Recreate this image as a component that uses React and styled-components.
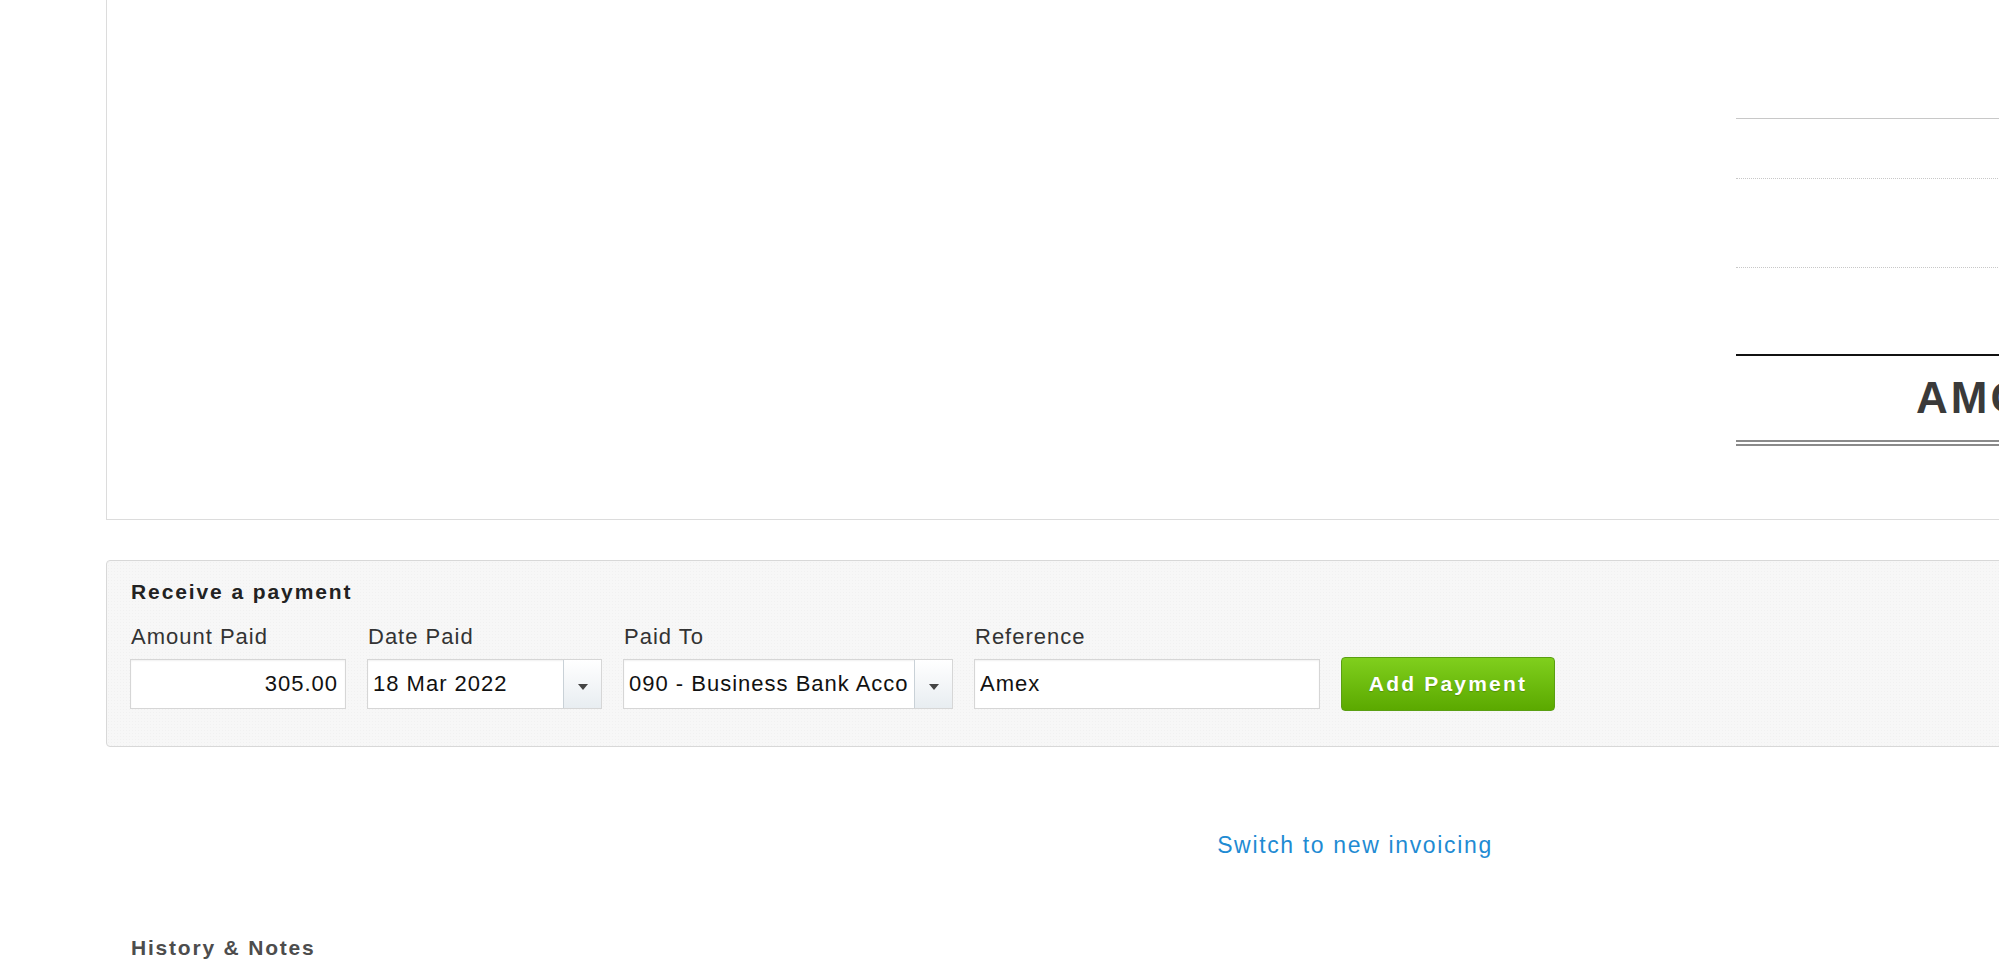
import React from 'react';
import styled, { createGlobalStyle } from 'styled-components';

const GlobalStyle = createGlobalStyle`
  html, body {
    margin: 0;
    padding: 0;
    background: #fff;
    overflow: hidden;
  }
  body {
    font-family: "Liberation Sans", Arial, sans-serif;
    color: #333;
  }
`;

const Main = styled.main`
  margin-left: 106px;
  width: 2498px;
`;

const InvoicePanel = styled.section`
  height: 520px;
  box-sizing: border-box;
  border-left: 1px solid #dcdcdc;
  border-bottom: 1px solid #dcdcdc;
  display: flex;
  justify-content: flex-end;
  padding-top: 118px;
`;

const Totals = styled.div`
  width: 868px;
  display: flex;
  flex-direction: column;
`;

const TotalRow = styled.div`
  height: ${p => p.$h}px;
  border-top: 1px ${p => (p.$dotted ? 'dotted' : 'solid')} #c8c8c8;
`;

const GrandRow = styled.div`
  border-top: 2px solid #111;
  border-bottom: 6px double #8a8a8a;
  padding: 17px 0 17px 180px;
`;

const GrandLabel = styled.span`
  font-size: 44px;
  line-height: 50px;
  font-weight: 700;
  letter-spacing: 3px;
  color: #3a3a3a;
  white-space: nowrap;
`;

const PaymentBox = styled.section`
  margin-top: 40px;
  box-sizing: border-box;
  border: 1px solid #d8d8d8;
  border-radius: 4px;
  background-color: #f7f7f7;
  background-image: radial-gradient(rgba(0, 0, 0, 0.025) 1px, transparent 1px);
  background-size: 3px 3px;
  padding: 19px 0 37px 23px;
`;

const BoxTitle = styled.h3`
  margin: 0 0 20px 1px;
  font-size: 21px;
  line-height: 24px;
  font-weight: 700;
  letter-spacing: 1.9px;
  color: #222;
`;

const FieldRow = styled.div`
  display: flex;
  align-items: flex-end;
  gap: 21px;
`;

const Field = styled.div`
  display: flex;
  flex-direction: column;
  width: ${p => p.$w}px;
`;

const Label = styled.label`
  font-size: 22px;
  line-height: 26px;
  letter-spacing: 1px;
  color: #333;
  margin: 0 0 9px 1px;
`;

const InputBox = styled.div`
  display: flex;
  height: 50px;
  box-sizing: border-box;
  border: 1px solid #d6d6d6;
  background: #fff;
  box-shadow: inset 0 1px 2px rgba(0, 0, 0, 0.06);
`;

const TextInput = styled.input`
  flex: 1;
  min-width: 0;
  border: 0;
  outline: 0;
  background: transparent;
  font-family: "Liberation Sans", Arial, sans-serif;
  font-size: 22px;
  letter-spacing: 1px;
  color: #111;
  padding: 0 ${p => (p.$right ? '7px' : '5px')};
  text-align: ${p => (p.$right ? 'right' : 'left')};
`;

const DropButton = styled.span`
  width: 38px;
  flex: none;
  border-left: 1px solid #c9d1d7;
  background: linear-gradient(#ffffff, #e8edf1);
  display: flex;
  align-items: center;
  justify-content: center;
  padding-top: 5px;
  box-sizing: border-box;

  &::after {
    content: '';
    border-left: 5px solid transparent;
    border-right: 5px solid transparent;
    border-top: 6px solid #444;
  }
`;

const AddButton = styled.button`
  width: 214px;
  height: 54px;
  margin-bottom: -2px;
  border: 1px solid #5a9f12;
  border-radius: 4px;
  background: linear-gradient(#80cf1d, #5ba900);
  color: #fff;
  font-family: "Liberation Sans", Arial, sans-serif;
  font-size: 21px;
  font-weight: 700;
  letter-spacing: 2.2px;
  text-shadow: 0 1px 1px rgba(0, 0, 0, 0.2);
  cursor: pointer;
`;

const SwitchRow = styled.div`
  margin-top: 84px;
  text-align: center;
`;

const SwitchLink = styled.a`
  font-size: 23px;
  line-height: 28px;
  letter-spacing: 1.65px;
  color: #1f8bd3;
  text-decoration: none;
`;

const SectionHeading = styled.h4`
  margin: 77px 0 0 25px;
  font-size: 21px;
  line-height: 24px;
  font-weight: 700;
  letter-spacing: 1.8px;
  color: #4d4d4d;
`;

const fields = [
  { id: 'amount', label: 'Amount Paid', value: '305.00', width: 216, right: true },
  { id: 'date', label: 'Date Paid', value: '18 Mar 2022', width: 235, drop: true },
  { id: 'paidTo', label: 'Paid To', value: '090 - Business Bank Account', width: 330, drop: true },
  { id: 'reference', label: 'Reference', value: 'Amex', width: 346 },
];

const App = () => {
  return (
    <>
      <GlobalStyle />
      <Main>
        <InvoicePanel>
          <Totals>
            <TotalRow $h={59} />
            <TotalRow $h={88} $dotted />
            <TotalRow $h={86} $dotted />
            <GrandRow>
              <GrandLabel>AMOUNT DUE</GrandLabel>
            </GrandRow>
          </Totals>
        </InvoicePanel>

        <PaymentBox>
          <BoxTitle>Receive a payment</BoxTitle>
          <FieldRow>
            {fields.map(f => (
              <Field key={f.id} $w={f.width}>
                <Label htmlFor={f.id}>{f.label}</Label>
                <InputBox>
                  <TextInput id={f.id} defaultValue={f.value} readOnly $right={f.right} />
                  {f.drop && <DropButton />}
                </InputBox>
              </Field>
            ))}
            <AddButton type="button">Add Payment</AddButton>
          </FieldRow>
        </PaymentBox>

        <SwitchRow>
          <SwitchLink href="#">Switch to new invoicing</SwitchLink>
        </SwitchRow>

        <SectionHeading>History &amp; Notes</SectionHeading>
      </Main>
    </>
  );
};

export default App;
